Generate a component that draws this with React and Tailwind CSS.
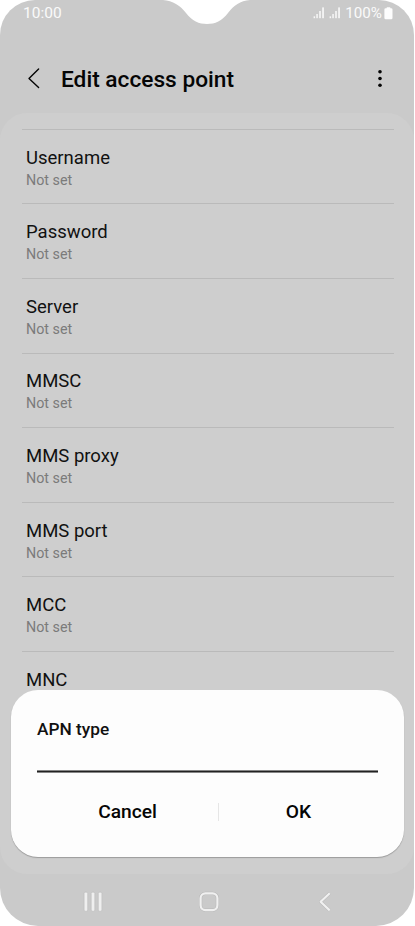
const FIELDS = ["Username", "Password", "Server", "MMSC", "MMS proxy", "MMS port", "MCC", "MNC"];

const SignalIcon = () => (
  <svg width="12" height="12" viewBox="0 0 12 12" fill="#f7f7f7">
    <rect x="0.6" y="9.3" width="1.5" height="1.9" />
    <rect x="3.3" y="7" width="1.5" height="4.2" />
    <rect x="6.2" y="4" width="1.6" height="7.2" />
    <rect x="9.2" y="0.4" width="1.7" height="10.8" />
  </svg>
);

const BatteryIcon = () => (
  <svg width="9" height="13" viewBox="0 0 9 13" fill="#fdfdfd">
    <path d="M2.6 1.3V.8Q2.6.2 3.2.2h2.6q.6 0 .6.6v.5h.8q1.3 0 1.3 1.2v8.5q0 1.2-1.3 1.2H1.7Q.4 12.2.4 11V2.5q0-1.2 1.3-1.2z" />
  </svg>
);

const StatusBar = () => (
  <div className="flex h-[27px] shrink-0 items-center justify-between pr-[21px] pl-[23px] text-[15.5px] leading-none text-[#fafafa]">
    <span>10:00</span>
    <div className="flex items-center">
      <SignalIcon />
      <span className="w-1" />
      <SignalIcon />
      <span className="ml-1 text-[15.2px]">100%</span>
      <span className="ml-[2px]">
        <BatteryIcon />
      </span>
    </div>
  </div>
);

const Header = () => (
  <header className="flex h-[86px] shrink-0 items-start pt-[34px] pr-[29px] pl-[27px]">
    <button className="mt-[6px]" aria-label="Back">
      <svg width="14" height="22" viewBox="0 0 14 22" fill="none" stroke="#050505" strokeWidth="1.4" strokeLinecap="round" strokeLinejoin="round">
        <path d="M11.6 2 2 11.6l9.6 9" />
      </svg>
    </button>
    <h1 className="mt-px ml-5 text-[22.7px] leading-9 font-medium text-[#050505]">Edit access point</h1>
    <button className="mt-[8px] ml-auto" aria-label="More options">
      <svg width="10" height="20" viewBox="0 0 10 20" fill="#050505">
        <circle cx="5" cy="2.7" r="1.8" />
        <circle cx="5" cy="9.5" r="1.8" />
        <circle cx="5" cy="16.3" r="1.8" />
      </svg>
    </button>
  </header>
);

const Field = ({ label }) => (
  <div className="h-[74.6px] shrink-0 border-t border-[#bababa] pt-[15.7px] pl-1">
    <p className="text-[18.5px] leading-6 text-[#111111]">{label}</p>
    <p className="text-[14.3px] leading-5 text-[#7b7b7b]">Not set</p>
  </div>
);

const NavBar = () => (
  <nav className="flex h-[52px] shrink-0 items-center justify-between pt-[3px] pr-[78px] pl-[82px]">
    <svg width="22" height="22" viewBox="0 0 22 22" fill="#efefef" stroke="#bcbcbc" strokeWidth="0.6">
      <rect x="2.1" y="1.2" width="3.6" height="19" rx="1.2" />
      <rect x="9.2" y="1.2" width="3.6" height="19" rx="1.2" />
      <rect x="16.3" y="1.2" width="3.6" height="19" rx="1.2" />
    </svg>
    <svg width="22" height="22" viewBox="0 0 22 22" fill="none">
      <rect x="2.6" y="2.3" width="16.8" height="16.8" rx="4.8" stroke="#b8b8b8" strokeWidth="3.2" />
      <rect x="2.6" y="2.3" width="16.8" height="16.8" rx="4.8" stroke="#f0f0f0" strokeWidth="2.2" />
    </svg>
    <svg width="22" height="22" viewBox="0 0 22 22" fill="none" strokeLinejoin="round">
      <path d="M15.7 2.2 6.6 10.8l9.1 8.6" stroke="#b8b8b8" strokeWidth="3.2" />
      <path d="M15.7 2.2 6.6 10.8l9.1 8.6" stroke="#f0f0f0" strokeWidth="2.2" />
    </svg>
  </nav>
);

const ApnDialog = () => (
  <div className="absolute top-[690px] left-[11px] flex h-[166.5px] w-[393px] flex-col rounded-[27px] bg-[#fdfdfd] px-[26px] pt-[27px] shadow-[0_1px_1px_rgba(0,0,0,0.25)]">
    <h2 className="text-[17.3px] leading-6 font-medium text-[#111111]">APN type</h2>
    <div className="mt-[29px] h-[3px] border-y border-[#858585] bg-[#222222]" />
    <div className="mt-[25px] flex h-7 items-center text-[19.2px] font-medium text-[#050505]">
      <button className="w-[181px] shrink-0 text-center">Cancel</button>
      <span className="mb-px h-[18px] w-px shrink-0 bg-[#e6e6e6]" />
      <button className="w-[159px] shrink-0 text-center">OK</button>
    </div>
  </div>
);

const App = () => (
  <div className="h-[926px] w-[415px] overflow-hidden bg-white font-[Roboto,sans-serif]">
    <div className="relative flex h-[926px] w-[414px] flex-col overflow-hidden rounded-t-[35px] rounded-b-[38px] bg-[#cacaca]">
      <svg className="absolute top-0 left-[160px]" width="94" height="25" viewBox="0 0 94 25" fill="#ffffff">
        <path d="M3 0C13 1 20 5 26 13C32 21 39 24 47 24S62 21 68 13C74 5 80 1 90 0z" />
      </svg>
      <StatusBar />
      <Header />
      <main className="flex h-[761px] shrink-0 flex-col overflow-hidden rounded-[27px] bg-[#cecece] pt-[15.9px] pr-5 pl-[22px]">
        {FIELDS.map((label) => (
          <Field key={label} label={label} />
        ))}
      </main>
      <NavBar />
      <ApnDialog />
    </div>
  </div>
);

export default App;
